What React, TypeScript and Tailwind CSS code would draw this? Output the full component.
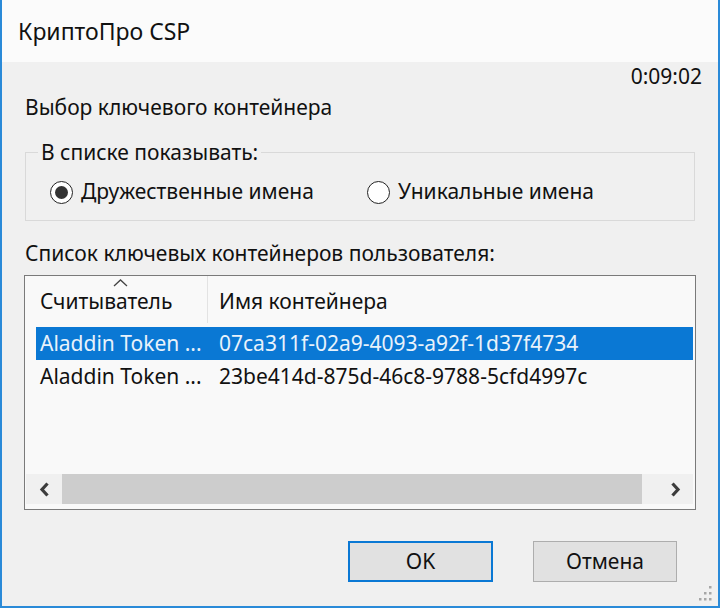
import React from 'react';

const font = { fontFamily: '"Noto Sans", "Open Sans", sans-serif' };

function Radio({ checked, label }: { checked: boolean; label: string }) {
  return (
    <label className="flex items-center gap-[8px]">
      <span className="flex h-[23px] w-[23px] items-center justify-center rounded-full border-[1.5px] border-[#222] bg-white">
        {checked && <span className="h-[13px] w-[13px] rounded-full bg-[#333]" />}
      </span>
      <span>{label}</span>
    </label>
  );
}

function SizeGrip() {
  const dots = [
    [10, 0],
    [5, 6],
    [10, 6],
    [0, 12],
    [5, 12],
    [10, 12],
  ];
  return (
    <svg width="13" height="15" viewBox="0 0 13 15" className="absolute bottom-[5px] right-[6px]">
      {dots.map(([x, y], i) => (
        <rect key={i} x={x} y={y} width="2.5" height="2.5" fill="#a6a6a6" />
      ))}
    </svg>
  );
}

export default function App() {
  const rows = [
    { reader: 'Aladdin Token ...', name: '07ca311f-02a9-4093-a92f-1d37f4734', selected: true },
    { reader: 'Aladdin Token ...', name: '23be414d-875d-46c8-9788-5cfd4997c', selected: false },
  ];

  return (
    <div
      className="relative h-[608px] w-[720px] overflow-hidden border-x-2 border-b-2 border-[#2a8ad8] bg-[#f0f0f0] text-[21px] text-[#111]"
      style={font}
    >
      {/* Title bar */}
      <div className="h-[62px] bg-[#fbfbfb] pl-[16px] pt-[16px] text-[23px] leading-[30px] text-[#111]">КриптоПро CSP</div>

      {/* Body */}
      <div className="px-[22px]">
        <div className="-mr-[6px] text-right leading-[28px]">0:09:02</div>
        <div className="mt-[3px] pl-px leading-[28px]">Выбор ключевого контейнера</div>

        <fieldset className="ml-px mt-[17px] w-[670px] border border-[#d9d9d9] px-[24px] pb-[14px]">
          <legend className="ml-[-12px] px-[3px] leading-[28px]">В списке показывать:</legend>
          <div className="mt-[12px] flex h-[28px] items-center">
            <div className="w-[317px]">
              <Radio checked label="Дружественные имена" />
            </div>
            <Radio checked={false} label="Уникальные имена" />
          </div>
        </fieldset>

        <div className="mt-[18px] pl-px leading-[28px]">Список ключевых контейнеров пользователя:</div>

        {/* List view */}
        <div className="mt-[8px] flex h-[235px] w-[672px] flex-col border border-[#7a7a7a] bg-[#f9f9f9] pb-[5px] pr-[2px]">
          <div className="relative flex h-[47px] shrink-0 items-end pb-[6px]">
            <svg width="15" height="8" viewBox="0 0 15 8" className="absolute left-[88px] top-[3px]">
              <path d="M1 7 L7.5 1 L14 7" fill="none" stroke="#444" strokeWidth="1.3" />
            </svg>
            <div className="w-[182px] pl-[15px]">Считыватель</div>
            <div className="absolute bottom-0 left-[182px] top-0 w-px bg-[#e3e3e3]" />
            <div className="pl-[12px]">Имя контейнера</div>
          </div>

          <div className="mt-[4px] flex flex-col pl-[11px]">
            {rows.map((r, i) => (
              <div
                key={i}
                className={`flex h-[33px] items-center ${r.selected ? 'bg-[#0a78d4] text-[#e8f2fb]' : ''}`}
              >
                <div className="w-[183px] pl-[4px]">{r.reader}</div>
                <div>{r.name}</div>
              </div>
            ))}
          </div>

          <div className="flex-1" />

          {/* Horizontal scrollbar */}
          <div className="ml-px flex h-[30px] shrink-0 bg-[#f0f0f0]">
            <div className="flex w-[36px] items-center justify-center">
              <svg width="11" height="15" viewBox="0 0 11 15">
                <path d="M8.5 1.5 L3 7.5 L8.5 13.5" fill="none" stroke="#3c3c3c" strokeWidth="3.2" />
              </svg>
            </div>
            <div className="w-[580px] bg-[#cdcdcd]" />
            <div className="flex-1" />
            <div className="flex w-[36px] items-center justify-center">
              <svg width="11" height="15" viewBox="0 0 11 15">
                <path d="M2.5 1.5 L8 7.5 L2.5 13.5" fill="none" stroke="#3c3c3c" strokeWidth="3.2" />
              </svg>
            </div>
          </div>
        </div>

        {/* Buttons */}
        <div className="mt-[31px] flex justify-end gap-[40px] pr-[19px]">
          <button className="h-[41px] w-[145px] border-2 border-[#0a78d4] bg-[#e1e1e1]">OK</button>
          <button className="h-[41px] w-[144px] border border-[#adadad] bg-[#e1e1e1]">Отмена</button>
        </div>
      </div>

      <SizeGrip />
    </div>
  );
}
